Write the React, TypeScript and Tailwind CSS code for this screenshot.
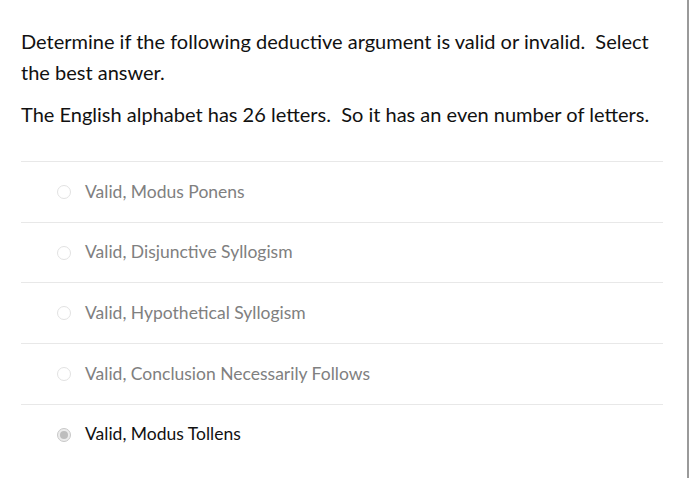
const options = [
  { label: 'Valid, Modus Ponens', selected: false },
  { label: 'Valid, Disjunctive Syllogism', selected: false },
  { label: 'Valid, Hypothetical Syllogism', selected: false },
  { label: 'Valid, Conclusion Necessarily Follows', selected: false },
  { label: 'Valid, Modus Tollens', selected: true },
];

export default function App() {
  return (
    <div className="flex h-[478px] w-[692px] bg-white" style={{ fontFamily: 'Lato, "Open Sans", sans-serif' }}>
      <div className="w-[689px] border-r-2 border-[#9a9a9a]">
        <div className="ml-[21px] w-[642px] pt-[26px]">
          <p className="text-[20px] leading-[31px] text-[#111]">
            Determine if the following deductive argument is valid or invalid.&nbsp; Select the best answer.
          </p>
          <p className="mt-[11px] text-[20px] leading-[31px] text-[#111]">
            The English alphabet has 26 letters.&nbsp; So it has an even number of letters.
          </p>
          <div className="mt-[31px]">
            {options.map((o) => (
              <div key={o.label} className="flex h-[60.7px] items-center border-t border-[#e8e8e8]">
                <span
                  className={`ml-[36px] flex h-[14px] w-[14px] items-center justify-center rounded-full border ${
                    o.selected ? 'border-[#c8c8c8] bg-[#ececec]' : 'border-[#e2e2e2] bg-white'
                  }`}
                >
                  {o.selected && <span className="h-[8px] w-[8px] rounded-full bg-[#bdbdbd]" />}
                </span>
                <span className={`ml-[14px] text-[17.5px] ${o.selected ? 'text-[#111]' : 'text-[#808080]'}`}>
                  {o.label}
                </span>
              </div>
            ))}
          </div>
        </div>
      </div>
    </div>
  );
}
